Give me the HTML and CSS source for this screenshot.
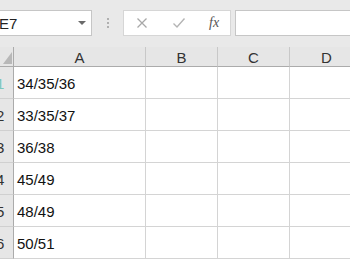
FILE: index.html
```html
<!DOCTYPE html>
<html>
	<head>
		<meta charset='utf8'>
		<title>表格</title>
		<link rel="stylesheet" href="styles.css">
	</head>
	<body>
		<div id="formula_bar">
			<div class="name_box">
				<span class="name_text">E7</span>
				<span class="drop_arrow"></span>
			</div>
			<div class="grip"><i></i><i></i><i></i></div>
			<div class="fx_buttons">
				<svg class="btn_icon" width="12" height="12" viewBox="0 0 12 12"><path d="M1.5 1.5L10.5 10.5M10.5 1.5L1.5 10.5" stroke="#a8a8a8" stroke-width="1.3" fill="none"/></svg>
				<svg class="btn_icon" width="14" height="12" viewBox="0 0 14 12"><path d="M1.5 6.5L5 10L12.5 1.5" stroke="#b4b4b4" stroke-width="1.4" fill="none"/></svg>
				<span class="fx_text">fx</span>
			</div>
			<div class="formula_input"></div>
		</div>
		<div id="sheet">
			<div class="corner"><span class="corner_tri"></span></div>
			<div class="col_head">A</div>
			<div class="col_head">B</div>
			<div class="col_head">C</div>
			<div class="col_head">D</div>

			<div class="row_head"><span class="first">1</span></div>
			<div class="cell">34/35/36</div><div class="cell"></div><div class="cell"></div><div class="cell"></div>

			<div class="row_head"><span>2</span></div>
			<div class="cell">33/35/37</div><div class="cell"></div><div class="cell"></div><div class="cell"></div>

			<div class="row_head"><span>3</span></div>
			<div class="cell">36/38</div><div class="cell"></div><div class="cell"></div><div class="cell"></div>

			<div class="row_head"><span>4</span></div>
			<div class="cell">45/49</div><div class="cell"></div><div class="cell"></div><div class="cell"></div>

			<div class="row_head"><span>5</span></div>
			<div class="cell">48/49</div><div class="cell"></div><div class="cell"></div><div class="cell"></div>

			<div class="row_head"><span>6</span></div>
			<div class="cell">50/51</div><div class="cell"></div><div class="cell"></div><div class="cell"></div>
		</div>
	</body>
</html>
```

FILE: styles.css
```css
body{
	margin:0;
	width:350px;
	height:260px;
	overflow:hidden;
	background:#ffffff;
	font-family:"Liberation Sans","Noto Sans CJK SC",sans-serif;
}
#formula_bar{
	display:flex;
	align-items:flex-start;
	height:47px;
	padding-top:10px;
	box-sizing:border-box;
	background:#e9e9e9;
}
.name_box{
	position:relative;
	margin-left:-8px;
	width:100px;
	height:26px;
	box-sizing:border-box;
	border:1px solid #c6c6c6;
	background:#ffffff;
	display:flex;
	align-items:center;
	padding-left:6px;
	font-size:15px;
	color:#222;
}
.drop_arrow{
	position:absolute;
	left:85px;
	top:10px;
	width:0;
	height:0;
	border-left:4px solid transparent;
	border-right:4px solid transparent;
	border-top:4px solid #6a6a6a;
}
.grip{
	width:31px;
	height:26px;
	display:flex;
	flex-direction:column;
	align-items:center;
	justify-content:center;
	gap:2px;
}
.grip i{
	display:block;
	width:2px;
	height:2px;
	background:#b0b0b0;
}
.fx_buttons{
	width:108px;
	height:26px;
	box-sizing:border-box;
	border:1px solid #d6d6d6;
	background:#ffffff;
	display:flex;
	align-items:center;
	padding-left:12px;
	gap:24px;
}
.fx_text{
	font-family:"Liberation Serif",serif;
	font-style:italic;
	font-size:14px;
	color:#555;
	margin-left:-1px;
}
.formula_input{
	flex:1;
	height:26px;
	margin-left:4px;
	margin-right:-2px;
	box-sizing:border-box;
	border:1px solid #c6c6c6;
	background:#ffffff;
}
#sheet{
	display:grid;
	grid-template-columns:14px 132px 72px 72px 74px;
	grid-template-rows:20px repeat(6,32px);
}
.corner,.col_head{
	background:#e6e6e6;
	border-bottom:1px solid #ababab;
	border-right:1px solid #c8c8c8;
	box-sizing:border-box;
}
.corner{
	position:relative;
	border-right:1px solid #ababab;
}
.corner_tri{
	position:absolute;
	right:1px;
	bottom:2px;
	width:0;
	height:0;
	border-left:9px solid transparent;
	border-bottom:12px solid #b8b8b8;
}
.col_head{
	display:flex;
	align-items:center;
	justify-content:center;
	font-size:15px;
	color:#333;
	padding-top:2px;
}
.row_head{
	background:#e6e6e6;
	border-right:1px solid #ababab;
	border-bottom:1px solid #d0d0d0;
	box-sizing:border-box;
	overflow:hidden;
	position:relative;
}
.row_head span{
	position:absolute;
	left:-4px;
	top:8px;
	font-size:15px;
	color:#333;
}
.row_head span.first{
	color:#7cc6bd;
}
.cell{
	border-right:1px solid #d4d4d4;
	border-bottom:1px solid #d4d4d4;
	box-sizing:border-box;
	font-size:15px;
	color:#111;
	padding-left:3px;
	display:flex;
	align-items:center;
	padding-top:2px;
}
```
